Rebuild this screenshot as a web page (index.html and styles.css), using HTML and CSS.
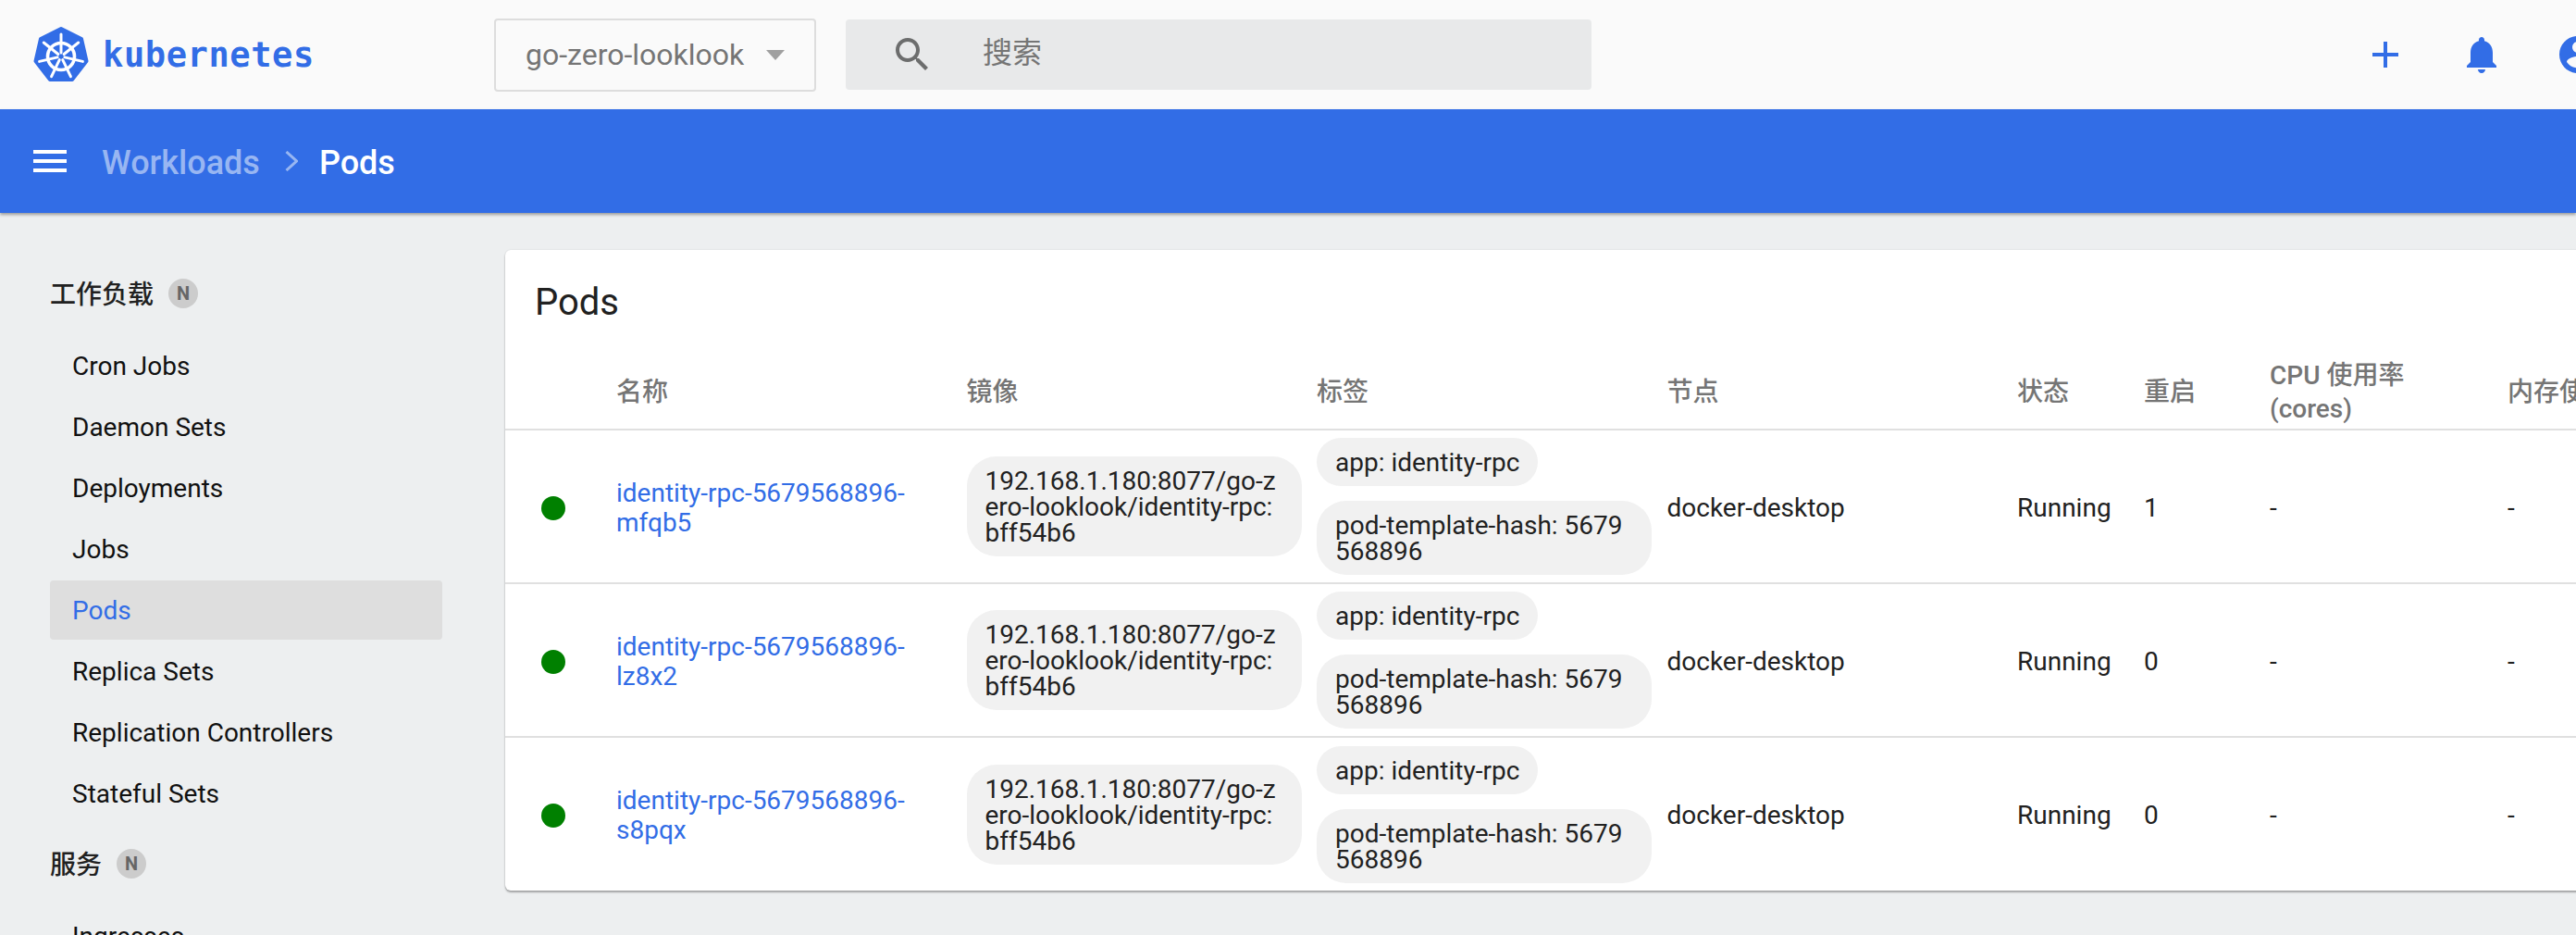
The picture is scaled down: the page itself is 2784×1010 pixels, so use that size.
FILE: index.html
```html
<!DOCTYPE html>
<html lang="zh-CN">
<head>
    <meta charset="UTF-8">
    <title>Pods - Kubernetes Dashboard</title>
    <link rel="stylesheet" href="styles.css">
</head>
<body>
    <header class="toolbar">
        <a class="brand">
            <svg class="brand-mark" viewBox="0 0 60 62">
                <polygon class="mark-hept" points="30,3 52,14 57.5,38 42,58 18,58 2.5,38 8,14"/>
                <circle class="mark-ring" cx="30" cy="33" r="14.5"/>
                <g class="mark-spokes">
                    <line x1="30" y1="29" x2="30" y2="9"/>
                    <line x1="30" y1="29" x2="30" y2="9" transform="rotate(51.4 30 33)"/>
                    <line x1="30" y1="29" x2="30" y2="9" transform="rotate(102.9 30 33)"/>
                    <line x1="30" y1="29" x2="30" y2="9" transform="rotate(154.3 30 33)"/>
                    <line x1="30" y1="29" x2="30" y2="9" transform="rotate(205.7 30 33)"/>
                    <line x1="30" y1="29" x2="30" y2="9" transform="rotate(257.1 30 33)"/>
                    <line x1="30" y1="29" x2="30" y2="9" transform="rotate(308.6 30 33)"/>
                </g>
                <circle class="mark-hub" cx="30" cy="33" r="2"/>
            </svg>
            <span class="brand-name">kubernetes</span>
        </a>
        <div class="ns-select">
            <span class="ns-value">go-zero-looklook</span>
            <span class="ns-arrow"></span>
        </div>
        <div class="search">
            <svg class="icon search-icon" viewBox="0 0 24 24"><path d="M15.5 14h-.79l-.28-.27C15.41 12.59 16 11.11 16 9.5 16 5.91 13.09 3 9.5 3S3 5.91 3 9.5 5.91 16 9.5 16c1.61 0 3.09-.59 4.23-1.57l.27.28v.79l5 4.99L20.49 19l-4.99-5zm-6 0C7.01 14 5 11.99 5 9.5S7.01 5 9.5 5 14 7.01 14 9.5 11.99 14 9.5 14z"/></svg>
            <span class="search-text">搜索</span>
        </div>
        <div class="actions">
            <svg class="icon action" viewBox="0 0 24 24"><path d="M19 13h-6v6h-2v-6H5v-2h6V5h2v6h6v2z"/></svg>
            <svg class="icon action" viewBox="0 0 24 24"><path d="M12 22c1.1 0 2-.9 2-2h-4c0 1.1.89 2 2 2zm6-6v-5c0-3.07-1.64-5.64-4.5-6.32V4c0-.83-.67-1.5-1.5-1.5s-1.5.67-1.5 1.5v.68C7.63 5.36 6 7.92 6 11v5l-2 2v1h16v-1l-2-2z"/></svg>
            <svg class="icon action" viewBox="0 0 24 24"><path d="M12 2C6.48 2 2 6.48 2 12s4.48 10 10 10 10-4.48 10-10S17.52 2 12 2zm0 3c1.66 0 3 1.34 3 3s-1.34 3-3 3-3-1.34-3-3 1.34-3 3-3zm0 14.2c-2.5 0-4.71-1.28-6-3.22.03-1.99 4-3.08 6-3.08 1.99 0 5.97 1.09 6 3.08-1.29 1.94-3.5 3.22-6 3.22z"/></svg>
        </div>
    </header>

    <div class="navbar">
        <svg class="icon menu-icon" viewBox="0 0 24 24"><path d="M3 18h18v-2H3v2zm0-5h18v-2H3v2zm0-7v2h18V6H3z"/></svg>
        <span class="crumb">Workloads</span>
        <svg class="crumb-sep" viewBox="0 0 14 22"><polyline points="1.5,1 12.5,11 1.5,21"/></svg>
        <span class="crumb crumb-current">Pods</span>
    </div>

    <main class="content">
        <nav class="sidebar">
            <div class="nav-group"><span class="group-name">工作负载</span> <span class="ns-badge">N</span></div>
            <a class="nav-item">Cron Jobs</a>
            <a class="nav-item">Daemon Sets</a>
            <a class="nav-item">Deployments</a>
            <a class="nav-item">Jobs</a>
            <a class="nav-item active">Pods</a>
            <a class="nav-item">Replica Sets</a>
            <a class="nav-item">Replication Controllers</a>
            <a class="nav-item">Stateful Sets</a>
            <div class="nav-group"><span class="group-name">服务</span> <span class="ns-badge">N</span></div>
            <a class="nav-item">Ingresses</a>
        </nav>

        <section class="card">
            <h2 class="card-title">Pods</h2>
            <table class="pods">
                <colgroup>
                    <col class="col-status">
                    <col class="col-wide">
                    <col class="col-wide">
                    <col class="col-wide">
                    <col class="col-wide">
                    <col class="col-state">
                    <col class="col-restarts">
                    <col class="col-metric">
                    <col class="col-memory">
                </colgroup>
                <thead>
                    <tr>
                        <th></th>
                        <th>名称</th>
                        <th>镜像</th>
                        <th>标签</th>
                        <th>节点</th>
                        <th>状态</th>
                        <th>重启</th>
                        <th>CPU 使用率 (cores)</th>
                        <th>内存使用率 (bytes)</th>
                    </tr>
                </thead>
                <tbody>
                    <tr>
                        <td><span class="status-dot"></span></td>
                        <td><a class="pod-link">identity-rpc-5679568896-mfqb5</a></td>
                        <td class="chips"><span class="chip">192.168.1.180:8077/go-zero-looklook/identity-rpc:bff54b6</span></td>
                        <td class="chips">
                            <span class="chip">app: identity-rpc</span>
                            <span class="chip">pod-template-hash: 5679568896</span>
                        </td>
                        <td>docker-desktop</td>
                        <td>Running</td>
                        <td>1</td>
                        <td>-</td>
                        <td>-</td>
                    </tr>
                    <tr>
                        <td><span class="status-dot"></span></td>
                        <td><a class="pod-link">identity-rpc-5679568896-lz8x2</a></td>
                        <td class="chips"><span class="chip">192.168.1.180:8077/go-zero-looklook/identity-rpc:bff54b6</span></td>
                        <td class="chips">
                            <span class="chip">app: identity-rpc</span>
                            <span class="chip">pod-template-hash: 5679568896</span>
                        </td>
                        <td>docker-desktop</td>
                        <td>Running</td>
                        <td>0</td>
                        <td>-</td>
                        <td>-</td>
                    </tr>
                    <tr>
                        <td><span class="status-dot"></span></td>
                        <td><a class="pod-link">identity-rpc-5679568896-s8pqx</a></td>
                        <td class="chips"><span class="chip">192.168.1.180:8077/go-zero-looklook/identity-rpc:bff54b6</span></td>
                        <td class="chips">
                            <span class="chip">app: identity-rpc</span>
                            <span class="chip">pod-template-hash: 5679568896</span>
                        </td>
                        <td>docker-desktop</td>
                        <td>Running</td>
                        <td>0</td>
                        <td>-</td>
                        <td>-</td>
                    </tr>
                </tbody>
            </table>
        </section>
    </main>
</body>
</html>
```

FILE: styles.css
```css
:root {
    --blue: #326de6;
    --bg: #edeff0;
    --text: #212121;
    --muted: #757575;
    --line: #e0e0e0;
    --chip: #f1f1f1;
}

* {
    margin: 0;
    padding: 0;
    box-sizing: border-box;
}

html, body {
    height: 100%;
}

body {
    font-family: Roboto, "Noto Sans CJK SC", sans-serif;
    font-size: 28px;
    color: var(--text);
    background: var(--bg);
    overflow: hidden;
    display: flex;
    flex-direction: column;
}

.icon {
    width: 48px;
    height: 48px;
    fill: currentColor;
    flex: none;
}

/* top toolbar */
.toolbar {
    height: 118px;
    flex: none;
    display: flex;
    align-items: center;
    background: #fafafa;
    padding-left: 36px;
}

.brand {
    width: 498px;
    display: flex;
    align-items: center;
    gap: 15px;
    color: var(--blue);
}

.brand-mark {
    width: 60px;
    height: 62px;
    flex: none;
}

.mark-hept {
    fill: var(--blue);
    stroke: var(--blue);
    stroke-width: 4;
    stroke-linejoin: round;
}

.mark-ring {
    fill: none;
    stroke: #fff;
    stroke-width: 3.6;
}

.mark-spokes line {
    stroke: #fff;
    stroke-width: 3;
    stroke-linecap: round;
}

.mark-hub {
    fill: var(--blue);
}

.brand-name {
    font-family: "DejaVu Sans Mono", monospace;
    font-size: 37px;
    font-weight: 700;
    letter-spacing: 0.6px;
    line-height: 1;
}

.ns-select {
    width: 348px;
    height: 79px;
    flex: none;
    display: flex;
    align-items: center;
    justify-content: space-between;
    padding: 0 32px;
    border: 2px solid #ddd;
    border-radius: 4px;
    margin-right: 32px;
    color: var(--muted);
    font-size: 32px;
}

.ns-arrow {
    width: 0;
    height: 0;
    border-left: 10px solid transparent;
    border-right: 10px solid transparent;
    border-top: 11px solid #a0a0a0;
}

.search {
    width: 806px;
    height: 76px;
    flex: none;
    display: flex;
    align-items: center;
    gap: 52px;
    padding-left: 48px;
    background: #e8e9ea;
    border-radius: 4px;
    color: var(--muted);
    font-size: 32px;
}

.search-text {
    line-height: 1;
    padding-bottom: 5px;
}

.search-icon {
    color: #6c6d6d;
}

.actions {
    margin-left: auto;
    display: flex;
    gap: 56px;
    margin-right: -26px;
    color: var(--blue);
}

/* blue breadcrumb bar */
.navbar {
    height: 112px;
    flex: none;
    display: flex;
    align-items: center;
    padding-left: 30px;
    background: var(--blue);
    color: #fff;
    box-shadow: 0 2px 3px rgba(0, 0, 0, 0.35);
    position: relative;
}

.menu-icon {
    margin-right: 32px;
}

.crumb {
    font-size: 36px;
    font-weight: 500;
    color: #98b6f2;
    padding-top: 3px;
}

.crumb-current {
    color: #fff;
}

.crumb-sep {
    width: 14px;
    height: 22px;
    margin: 0 23px 0 27px;
    fill: none;
    stroke: #98b6f2;
    stroke-width: 3;
}

/* page body */
.content {
    flex: 1;
    display: flex;
    min-height: 0;
    overflow: hidden;
}

.sidebar {
    width: 546px;
    flex: none;
    padding: 43px 68px 0 54px;
}

.nav-group {
    height: 64px;
    margin: 12px 0 14px;
    display: flex;
    align-items: center;
    gap: 16px;
    font-weight: 500;
    color: #212121;
}

.group-name {
    padding-bottom: 2px;
}

.ns-badge {
    width: 32px;
    height: 32px;
    display: flex;
    align-items: center;
    justify-content: center;
    border-radius: 50%;
    background: #ccc;
    color: #666;
    font-size: 20px;
    font-weight: 700;
}

.nav-item {
    display: flex;
    align-items: center;
    height: 64px;
    margin-bottom: 2px;
    padding-left: 24px;
    border-radius: 4px;
    color: #111;
}

.nav-item.active {
    background: #dedede;
    color: var(--blue);
}

.card {
    flex: none;
    align-self: flex-start;
    margin-top: 40px;
    background: #fff;
    border-radius: 6px;
    box-shadow: 0 2px 2px rgba(0, 0, 0, 0.3), 0 0 2px rgba(0, 0, 0, 0.12);
}

.card-title {
    height: 114px;
    padding: 27px 0 0 32px;
    font-size: 40px;
    font-weight: 400;
    line-height: 60px;
}

/* table */
.pods {
    width: 2664px;
    table-layout: fixed;
    border-collapse: collapse;
}

.col-status { width: 120px; }
.col-wide { width: 378.5px; }
.col-state { width: 137px; }
.col-restarts { width: 136px; }
.col-metric { width: 257px; }
.col-memory { width: 500px; }

.pods th {
    height: 80px;
    padding-right: 30px;
    text-align: left;
    font-weight: 500;
    line-height: 36px;
    color: var(--muted);
    vertical-align: middle;
    border-bottom: 2px solid var(--line);
}

.pods td {
    height: 166px;
    padding: 3px 16px 0 0;
    vertical-align: middle;
    line-height: 32px;
    border-bottom: 2px solid var(--line);
}

.pods td.chips {
    padding-top: 0;
}

.pods tbody tr:last-child td {
    border-bottom: 0;
}

.status-dot {
    display: block;
    width: 26px;
    height: 26px;
    margin-left: 39px;
    border-radius: 50%;
    background: #008000;
}

.pod-link {
    color: var(--blue);
}

.chip {
    display: block;
    width: fit-content;
    max-width: 362px;
    padding: 13px 20px 11px;
    margin: 8px 0;
    border-radius: 32px;
    background: var(--chip);
    line-height: 28px;
    word-break: break-all;
}

.chip + .chip {
    margin-top: 16px;
}
```
